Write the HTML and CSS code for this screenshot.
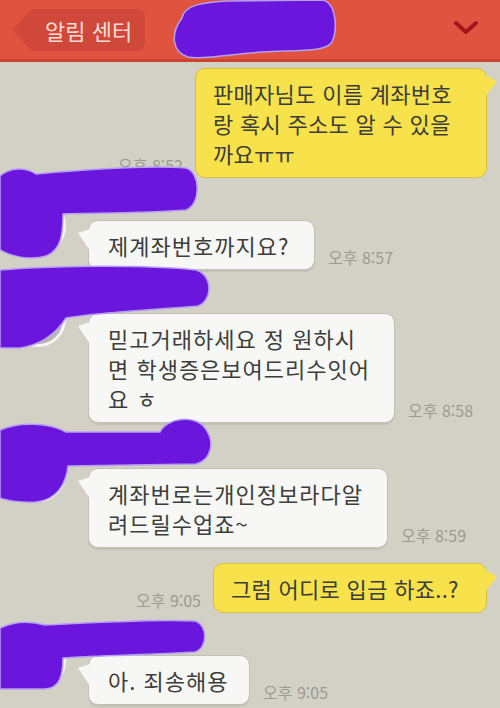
FILE: index.html
```html
<!DOCTYPE html>
<html lang="ko">
<head>
<meta charset="utf-8">
<title>알림 센터</title>
<link rel="stylesheet" href="styles.css">
</head>
<body>
<div class="screen">
  <header class="topbar">
    <div class="back">알림 센터</div>
    <svg class="chevron" width="26" height="16" viewBox="0 0 26 16"><path d="M3 3 L13 12 L23 3" fill="none" stroke="#a3161b" stroke-width="4" stroke-linecap="round" stroke-linejoin="round"/></svg>
  </header>
  <main class="chat">
    <div class="row out first">
      <span class="time">오후 8:52</span>
      <div class="bubble yellow w1">판매자님도 이름 계좌번호<br>랑 혹시 주소도 알 수 있을<br>까요ㅠㅠ</div>
    </div>
    <div class="row in g20">
      <div class="avatar"></div>
      <div class="body">
        <div class="bubble white w2">제계좌번호까지요?</div>
        <span class="time">오후 8:57</span>
      </div>
    </div>
    <div class="row in g21">
      <div class="avatar"></div>
      <div class="body">
        <div class="bubble white w3">믿고거래하세요 정 원하시<br>면 학생증은보여드리수잇어<br>요 ㅎ</div>
        <span class="time">오후 8:58</span>
      </div>
    </div>
    <div class="row in g23">
      <div class="avatar"></div>
      <div class="body">
        <div class="bubble white w4">계좌번로는개인정보라다알<br>려드릴수업죠~</div>
        <span class="time">오후 8:59</span>
      </div>
    </div>
    <div class="row out g15">
      <span class="time">오후 9:05</span>
      <div class="bubble yellow w5">그럼 어디로 입금 하죠..?</div>
    </div>
    <div class="row in g20">
      <div class="avatar"></div>
      <div class="body">
        <div class="bubble white w6">아. 죄송해용</div>
        <span class="time">오후 9:05</span>
      </div>
    </div>
  </main>
  <svg class="redact" width="500" height="708" viewBox="0 0 500 708">
    <g fill="#6a16dc" stroke="#b79ff0" stroke-width="1.5">
      <path d="M182 18 C184 6 200 2 230 1 L322 0 C336 2 338 28 332 42 C326 52 300 50 262 52 C232 54 204 60 188 57 C172 52 170 34 182 18 Z"/>
      <path d="M0 176 C10 167 26 167 36 174 C80 170 150 165 186 168 C201 172 201 205 186 210 C150 213 100 213 63 214 C63 232 62 250 46 256 C30 261 10 256 0 250 Z"/>
      <path d="M0 270 C60 265 150 265 196 270 C213 275 213 300 198 306 C150 310 100 312 66 318 C56 334 40 345 20 348 L0 348 Z"/>
      <path d="M0 430 C20 421 50 423 66 432 L160 432 C166 418 195 414 205 428 C215 441 212 460 196 464 L68 466 C66 485 56 500 36 502 C20 503 5 500 0 498 Z"/>
      <path d="M0 628 C15 621 30 621 45 625 C100 622 160 619 195 621 C208 625 208 648 195 652 C150 655 100 655 63 658 C63 675 60 688 45 689 L0 689 Z"/>
    </g>
  </svg>
</div>
</body>
</html>
```
FILE: styles.css
```css
* { box-sizing: border-box; }
html, body { margin: 0; padding: 0; }
body {
  width: 500px;
  height: 708px;
  overflow: hidden;
  background: #d3d1c5;
  font-family: "Noto Sans CJK KR", "Noto Sans", sans-serif;
}
.screen {
  position: relative;
  width: 500px;
  height: 708px;
  overflow: hidden;
  background: #d3d1c5;
}
.topbar {
  height: 62px;
  background: #e0533f;
  border-bottom: 3px solid #c9452f;
  display: flex;
  align-items: center;
  justify-content: space-between;
  padding: 0 21px 0 32px;
}
.back {
  position: relative;
  height: 42px;
  padding: 0 13px;
  background: #d0483a;
  border-radius: 0 8px 8px 0;
  color: #f8ddd4;
  font-size: 22px;
  line-height: 42px;
}
.back::before {
  content: "";
  position: absolute;
  left: -20px;
  top: 0;
  border-right: 20px solid #d0483a;
  border-top: 21px solid transparent;
  border-bottom: 21px solid transparent;
}
.chevron { margin-bottom: 4px; }

.chat {
  display: flex;
  flex-direction: column;
}
.row { display: flex; }
.row.out {
  justify-content: flex-end;
  align-items: flex-end;
  gap: 12px;
  padding-right: 13px;
}
.row.in {
  align-items: flex-start;
  gap: 22px;
  padding-left: 10px;
}
.first { margin-top: 6px; }
.g15 { margin-top: 15px; }
.g20 { margin-top: 20px; }
.g21 { margin-top: 21px; }
.g23 { margin-top: 23px; }

.avatar {
  width: 56px;
  height: 56px;
  border-radius: 50%;
  background: #b8b6ad;
  border: 3px solid #f4f4f2;
  flex: none;
}
.body {
  display: flex;
  align-items: flex-end;
  gap: 13px;
  padding-top: 22px;
}

.bubble {
  position: relative;
  border-radius: 10px;
  padding: 9px 16px 9px 19px;
  font-size: 22px;
  line-height: 30px;
  letter-spacing: 1px;
  color: #3d3d3b;
  white-space: nowrap;
}
.bubble.white {
  background: #f7f7f5;
  border: 1px solid #c2c0b5;
  box-shadow: 0 2px 1px rgba(0, 0, 0, 0.07);
}
.bubble.white::after {
  content: "";
  position: absolute;
  left: -11px;
  top: 8px;
  width: 12px;
  height: 22px;
  background: #f7f7f5;
  clip-path: polygon(0 18%, 100% 0, 100% 100%);
}
.bubble.yellow {
  background: #f8e24b;
  border: 1px solid #d8c03c;
  padding-left: 17px;
  letter-spacing: 0.3px;
}
.bubble.yellow::after {
  content: "";
  position: absolute;
  right: -11px;
  top: 6px;
  width: 12px;
  height: 22px;
  background: #f8e24b;
  clip-path: polygon(0 0, 100% 30%, 0 100%);
}
.w1 { width: 292px; }
.w2 { width: 227px; }
.w3 { width: 307px; }
.w4 { width: 300px; }
.w5 { width: 274px; letter-spacing: 1px; }
.w6 { width: 162px; }

.time {
  font-size: 16px;
  line-height: 20px;
  color: #9c9a91;
  margin-bottom: 3px;
  white-space: nowrap;
}

.redact {
  position: absolute;
  left: 0;
  top: 0;
  pointer-events: none;
}
```
